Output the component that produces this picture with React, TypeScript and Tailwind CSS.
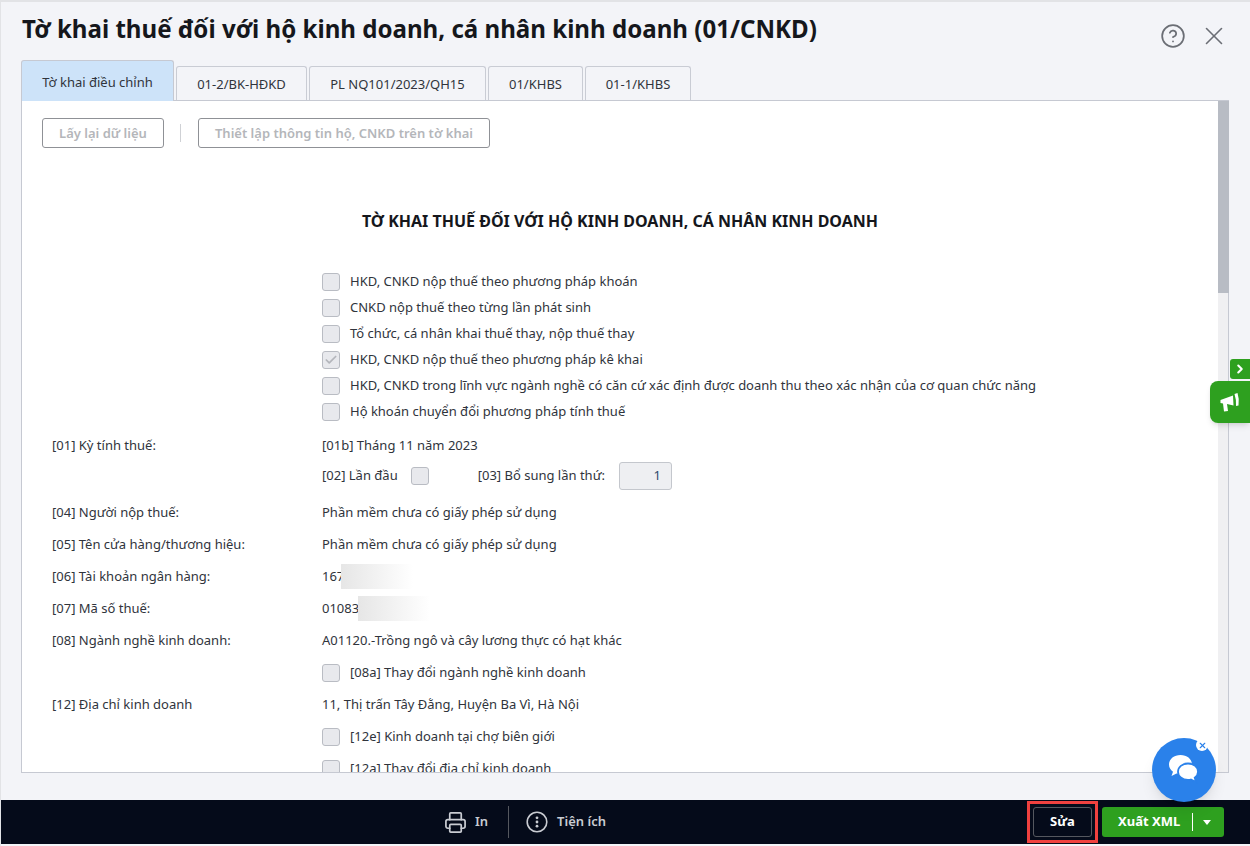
import React from 'react';
import { CircleHelp, X, Printer, Check, ChevronRight } from 'lucide-react';

const tabs = [
  { label: '01-2/BK-HĐKD', width: 'w-[131px]' },
  { label: 'PL NQ101/2023/QH15', width: 'w-[177px]' },
  { label: '01/KHBS', width: 'w-[95px]' },
  { label: '01-1/KHBS', width: 'w-[106px]' },
];

const typeOptions = [
  { label: 'HKD, CNKD nộp thuế theo phương pháp khoán' },
  { label: 'CNKD nộp thuế theo từng lần phát sinh' },
  { label: 'Tổ chức, cá nhân khai thuế thay, nộp thuế thay' },
  { label: 'HKD, CNKD nộp thuế theo phương pháp kê khai', checked: true },
  { label: 'HKD, CNKD trong lĩnh vực ngành nghề có căn cứ xác định được doanh thu theo xác nhận của cơ quan chức năng' },
  { label: 'Hộ khoán chuyển đổi phương pháp tính thuế' },
];

const CheckBox = ({ checked }: { checked?: boolean }) => (
  <span className="flex h-[18px] w-[18px] shrink-0 items-center justify-center rounded-[3px] border border-[#b9bcc3] bg-[#e8e9ed]">
    {checked && <Check size={14} strokeWidth={3} className="text-[#b4b6bc]" />}
  </span>
);

const Row = ({ label, children, height = 'h-8' }: { label?: string; children: React.ReactNode; height?: string }) => (
  <div className={`flex items-center ${height}`}>
    <div className="w-[270px] shrink-0">{label}</div>
    <div className="flex items-center">{children}</div>
  </div>
);

const Masked = ({ text, mask }: { text: string; mask: string }) => (
  <span className="relative">
    {text}
    <span className={`absolute top-[-3px] h-[25px] w-[72px] bg-gradient-to-r from-[#e6e6e6] to-white ${mask}`} />
  </span>
);

const App = () => {
  return (
    <div className="flex h-[846px] w-full flex-col overflow-hidden border-l border-t-2 border-[#e2e3e6] bg-[#f3f4f8] font-['Noto_Sans',sans-serif] text-[13px] text-[#30343c]">
      <header className="flex h-[58px] shrink-0 items-start justify-between pl-[21px] pr-[21px]">
        <h1 className="pt-[8px] text-[24.1px] leading-[38px] font-bold text-[#15171c]">
          Tờ khai thuế đối với hộ kinh doanh, cá nhân kinh doanh (01/CNKD)
        </h1>
        <div className="flex items-center gap-[13px] pt-[19px] text-[#6b6e75]">
          <CircleHelp size={26} strokeWidth={1.6} />
          <X size={30} strokeWidth={1.3} />
        </div>
      </header>

      <nav className="flex h-[41px] shrink-0 items-end pl-[20px]">
        <div className="relative z-10 flex h-[41px] w-[153px] items-center justify-center rounded-t-[3px] border border-b-0 border-[#c6c9d2] bg-[#cde3f9] pt-[3px]">
          Tờ khai điều chỉnh
        </div>
        {tabs.map((tab) => (
          <div
            key={tab.label}
            className={`ml-[2px] flex h-[35px] items-center justify-center rounded-t-[3px] border border-b-0 border-[#c9ccd4] pt-[2px] ${tab.width}`}
          >
            {tab.label}
          </div>
        ))}
      </nav>

      <main className="relative -mt-px ml-[20px] mr-[21px] flex h-[673px] shrink-0 overflow-hidden border-t border-b border-l border-[#c6c9d2] bg-white">
        <div className="min-w-0 flex-1">
          <div className="flex items-center pl-5 pt-[17px]">
            <button className="h-[30px] w-[122px] rounded-[3px] border border-[#8f9196] pt-px font-semibold text-[#b4b6ba]">
              Lấy lại dữ liệu
            </button>
            <span className="ml-[16px] mr-[17px] h-[18px] w-px bg-[#cfd1d5]" />
            <button className="h-[30px] w-[292px] rounded-[3px] border border-[#8f9196] pt-px font-semibold text-[#b4b6ba]">
              Thiết lập thông tin hộ, CNKD trên tờ khai
            </button>
          </div>

          <h2 className="mt-[61px] text-center text-[16px] leading-[24px] font-bold text-[#15171c]">
            TỜ KHAI THUẾ ĐỐI VỚI HỘ KINH DOANH, CÁ NHÂN KINH DOANH
          </h2>

          <div className="mt-[36px] flex flex-col pl-[300px]">
            {typeOptions.map((option) => (
              <div key={option.label} className="flex h-[26px] items-center gap-[10px]">
                <CheckBox checked={option.checked} />
                <span>{option.label}</span>
              </div>
            ))}
          </div>

          <div className="mt-[8px] flex flex-col pl-[30px]">
            <Row label="[01] Kỳ tính thuế:" height="h-[26px]">[01b] Tháng 11 năm 2023</Row>
            <Row height="h-[34px]">
              <span>[02] Lần đầu</span>
              <span className="ml-[13px]"><CheckBox /></span>
              <span className="ml-[49px]">[03] Bổ sung lần thứ:</span>
              <span className="ml-[14px] flex h-[28px] w-[53px] items-center justify-end rounded-[3px] border border-[#c4c7cd] bg-[#eeeff2] pr-[10px] text-[#2f4a6b]">1</span>
            </Row>
            <div className="h-[4px]" />
            <Row label="[04] Người nộp thuế:">Phần mềm chưa có giấy phép sử dụng</Row>
            <Row label="[05] Tên cửa hàng/thương hiệu:">Phần mềm chưa có giấy phép sử dụng</Row>
            <Row label="[06] Tài khoản ngân hàng:"><Masked text="167" mask="left-[19px]" /></Row>
            <Row label="[07] Mã số thuế:"><Masked text="01083" mask="left-[36px]" /></Row>
            <Row label="[08] Ngành nghề kinh doanh:">A01120.-Trồng ngô và cây lương thực có hạt khác</Row>
            <Row><CheckBox /><span className="ml-[10px]">[08a] Thay đổi ngành nghề kinh doanh</span></Row>
            <Row label="[12] Địa chỉ kinh doanh">11, Thị trấn Tây Đằng, Huyện Ba Vì, Hà Nội</Row>
            <Row><CheckBox /><span className="ml-[10px]">[12e] Kinh doanh tại chợ biên giới</span></Row>
            <Row><CheckBox /><span className="ml-[10px]">[12a] Thay đổi địa chỉ kinh doanh</span></Row>
          </div>
        </div>

        <div className="w-[11px] shrink-0 border-r border-[#c6c9d2] bg-[#f0f0f2]">
          <div className="h-[192px] w-[11px] bg-[#b8bcc4]" />
        </div>
      </main>

      <div className="h-[27px] shrink-0" />

      <footer className="flex h-[44px] shrink-0 items-center bg-[#050b1a] pl-[443px] pr-[26px] font-semibold text-[#c9ccd2]">
        <Printer size={23} strokeWidth={1.8} />
        <span className="ml-[8px]">In</span>
        <span className="ml-[20px] mr-[17px] h-[32px] w-px bg-[#55585f]" />
        <svg width="22" height="22" viewBox="0 0 22 22" fill="none" className="text-[#c9ccd2]">
          <circle cx="11" cy="11" r="9.8" stroke="currentColor" strokeWidth="1.6" />
          <circle cx="11" cy="6.8" r="1.4" fill="currentColor" />
          <circle cx="11" cy="11" r="1.4" fill="currentColor" />
          <circle cx="11" cy="15.2" r="1.4" fill="currentColor" />
        </svg>
        <span className="ml-[9px]">Tiện ích</span>

        <div className="ml-auto flex items-center gap-[4px]">
          <div className="border-[3px] border-[#f0413f] px-[3px] py-[3px]">
            <button className="flex h-[30px] w-[59px] items-center justify-center rounded-[3px] border border-[#55585f] font-bold text-white">
              Sửa
            </button>
          </div>
          <button className="flex h-[30px] w-[122px] items-center rounded-[3px] bg-[#2ea01f] pl-[16px] font-bold text-white">
            <span className="w-[74px] text-left">Xuất XML</span>
            <span className="h-[18px] w-px bg-white" />
            <span className="ml-[10px] h-0 w-0 border-x-[4px] border-t-[5px] border-x-transparent border-t-white" />
          </button>
        </div>
      </footer>

      <div className="absolute top-[359px] right-0 flex h-[20px] w-[20px] items-center justify-center rounded-l-[3px] bg-[#2ea01f] text-white">
        <ChevronRight size={14} strokeWidth={3.5} />
      </div>
      <div className="absolute top-[381px] right-0 flex h-[42px] w-[40px] items-center justify-center rounded-l-[8px] bg-[#2ea01f] text-white shadow-md">
        <svg width="20" height="20" viewBox="0 0 20 20" fill="#fff" className="mt-px">
          <path d="M0.5 7 L13 2.5 L13.5 12.5 L7 11 L8 18 L4 18.5 L3 10.5 L0.5 10 Z" />
          <path d="M14.5 1 L17.5 0 Q19.5 6 18.5 12.5 L16 13 Q16.5 7 14.5 1 Z" />
        </svg>
      </div>

      <div className="absolute top-[738px] left-[1152px] flex h-[64px] w-[64px] items-center justify-center rounded-full bg-[#2a81ea] shadow-lg">
        <svg width="32" height="30" viewBox="0 0 32 30" className="-mt-[2px]">
          <path d="M12.5 1C5.9 1 1 5.2 1 10.5c0 3 1.5 5.5 4 7.2L3.5 22l5-2.4c1.2.3 2.6.5 4 .5 6.6 0 11.5-4.3 11.5-9.6S19.1 1 12.5 1z" fill="#fff" />
          <path d="M20 9.5c-5.8 0-10 3.6-10 8.2s4.2 8.2 10 8.2c1 0 2-.1 2.9-.4l5.1 2.5-1.3-4.3c2.1-1.5 3.3-3.6 3.3-6 0-4.6-4.2-8.2-10-8.2z" fill="#fff" stroke="#2a81ea" strokeWidth="1.8" />
        </svg>
        <span className="absolute top-[1px] right-[8px] flex h-[12px] w-[12px] items-center justify-center rounded-full bg-white text-[#2a81ea]">
          <X size={9} strokeWidth={3} />
        </span>
      </div>
    </div>
  );
};

export default App;
